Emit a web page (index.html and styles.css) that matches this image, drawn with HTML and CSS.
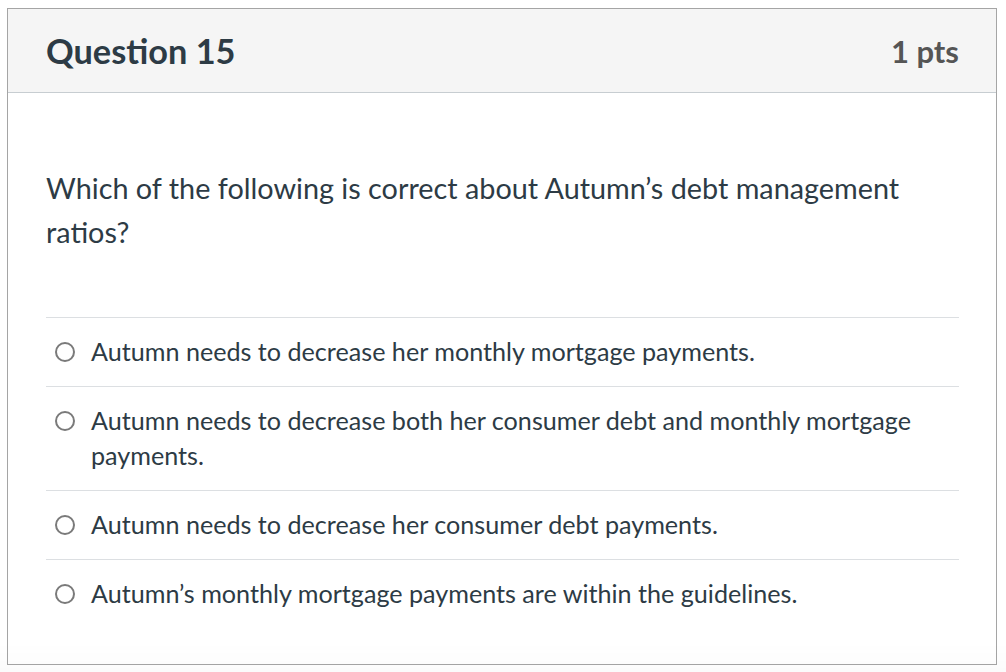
FILE: index.html
```html
<!DOCTYPE html>
<html lang="en">
<head>
<meta charset="utf-8">
<title>Question 15</title>
<link rel="stylesheet" href="styles.css">
</head>
<body>
<div class="question">
  <div class="header">
    <h2 class="title">Question 15</h2>
    <span class="points">1 pts</span>
  </div>
  <div class="body">
    <p class="prompt">Which of the following is correct about Autumn’s debt management ratios?</p>
    <div class="answers">
      <label class="answer"><span class="radio"></span><span class="text">Autumn needs to decrease her monthly mortgage payments.</span></label>
      <label class="answer"><span class="radio"></span><span class="text">Autumn needs to decrease both her consumer debt and monthly mortgage payments.</span></label>
      <label class="answer"><span class="radio"></span><span class="text">Autumn needs to decrease her consumer debt payments.</span></label>
      <label class="answer"><span class="radio"></span><span class="text">Autumn’s monthly mortgage payments are within the guidelines.</span></label>
    </div>
  </div>
</div>
<div class="fade"></div>
</body>
</html>
```

FILE: styles.css
```css
html, body {
  margin: 0;
  padding: 0;
  background: #fff;
}
body {
  padding: 8px 0 0 7px;
  font-family: Lato, "Open Sans", sans-serif;
  color: #2d3b45;
}
.question {
  box-sizing: border-box;
  width: 990px;
  height: 657px;
  border: 1px solid #a5a5a5;
  background: #fff;
}
.header {
  box-sizing: border-box;
  height: 84px;
  background: #f5f5f5;
  border-bottom: 1px solid #c7cdd1;
  display: flex;
  align-items: center;
  justify-content: space-between;
  padding: 0 37px 0 38px;
}
.title {
  margin: 0;
  font-size: 34.3px;
  font-weight: 700;
  color: #2d3b45;
}
.points {
  font-size: 31px;
  font-weight: 700;
  color: #555;
}
.body {
  padding: 0 37px 0 38px;
}
.prompt {
  margin: 73px 0 0;
  font-size: 28.8px;
  line-height: 44px;
}
.answers {
  margin-top: 63px;
}
.answer {
  display: flex;
  align-items: flex-start;
  border-top: 1px solid #dcdfe2;
  padding: 16px 0 17px;
  font-size: 25.15px;
  line-height: 35px;
}
.radio {
  flex: none;
  box-sizing: border-box;
  width: 20px;
  height: 20px;
  margin: 8px 16px 0 9px;
  border: 2px solid #7a7a7a;
  border-radius: 50%;
  background: #fff;
}
.fade {
  position: fixed;
  left: 0;
  right: 0;
  bottom: 0;
  height: 30px;
  background: linear-gradient(to bottom, rgba(0,0,0,0), rgba(0,0,0,0.015));
  pointer-events: none;
}
```
